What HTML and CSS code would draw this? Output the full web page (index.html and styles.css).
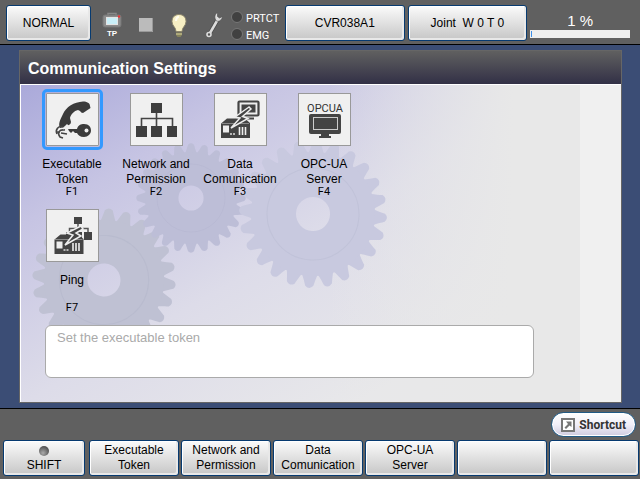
FILE: index.html
```html
<!DOCTYPE html>
<html lang="en">
<head>
<meta charset="utf-8">
<meta name="viewport" content="width=device-width, initial-scale=1">
<title>Communication Settings</title>
<link rel="stylesheet" href="styles.css">
</head>
<body>
<svg class="defs" aria-hidden="true">
  <defs>
    <path id="tooth1" d="M-8 -60C-6 -65 -5 -69 -4 -72Q0 -76 4 -72C5 -69 6 -65 8 -60Z"/>
    <g id="tooth2"><use href="#tooth1"/><use href="#tooth1" transform="rotate(15)"/></g>
    <g id="tooth4"><use href="#tooth2"/><use href="#tooth2" transform="rotate(30)"/></g>
    <g id="tooth8"><use href="#tooth4"/><use href="#tooth4" transform="rotate(60)"/></g>
    <g id="gear">
      <use href="#tooth8"/><use href="#tooth8" transform="rotate(120)"/><use href="#tooth8" transform="rotate(240)"/>
      <circle r="39.500" fill="none" stroke="currentColor" stroke-width="45"/>
      <circle r="46" fill="none" stroke="#8f90b0" stroke-opacity=".12"/>
    </g>
    <g id="controller">
      <path d="M9 31.500 15 26.500H33L38 31V46H9Z" fill="#444"/>
      <path d="M9.500 31.500H37" stroke="#888"/>
      <rect x="11" y="33.500" width="6" height="7" fill="#eee"/>
      <path d="M27.500 35V43M30.500 35V43M33.500 35V43" stroke="#eee" stroke-width="1.600"/>
      <path d="M18 42h2m1 0h2" stroke="#ddd" stroke-width="1.500"/>
    </g>
  </defs>
</svg>

<header class="topbar">
  <button class="key mode" type="button">NORMAL</button>
  <div class="status">
    <div class="tp">
      <svg width="20" height="17" viewBox="0 0 20 17" aria-hidden="true">
        <path d="M6 3V1.500H14V3" fill="none" stroke="#888" stroke-width="1.500"/>
        <rect x="1" y="3" width="18" height="12" rx="2" fill="#8b8b8b" stroke="#777"/>
        <rect x="4.500" y="5.500" width="11" height="7" fill="#c9eff8" stroke="#e4e4e4"/>
        <circle cx="17" cy="4.500" r="1.200" fill="#e33"/>
      </svg>
      <span>TP</span>
    </div>
    <svg width="14" height="14" viewBox="0 0 14 14" aria-hidden="true"><rect width="14" height="14" fill="#bbb"/><path d="M0 13.500H13.500V0" fill="none" stroke="#999"/></svg>
    <svg width="18" height="25" viewBox="0 0 18 25" aria-hidden="true">
      <path d="M9 1.500C4.500 1.500 2 4.500 2 8.500C2 13 6 14 6 18.500H12C12 14 16 13 16 8.500C16 4.500 13.500 1.500 9 1.500Z" fill="#f7efc4" stroke="#8c866c"/>
      <path d="M6 8C6 5.500 7 4 9 3.500" fill="none" stroke="#fffdf0" stroke-width="2"/>
      <path d="M6 19.500H12V22L10.500 24H7.500L6 22Z" fill="#87845c"/><path d="M6 21H12" stroke="#d5cf9b"/>
    </svg>
    <svg width="18" height="28" viewBox="0 0 18 28" aria-hidden="true">
      <path d="M12.500 9 5 22" stroke="#444" stroke-width="4"/>
      <path d="M12.500 9 5 22" stroke="#dcdcdc" stroke-width="2.600"/>
      <path d="M12.500 1.500C9.500 3 9 7.500 11.500 10C14 11 17 9 17.500 5.500L14.500 7 12.500 5.500Z" fill="#dcdcdc" stroke="#4a4a4a" stroke-width=".6"/>
      <circle cx="4" cy="23.500" r="2" fill="#555" stroke="#dcdcdc" stroke-width="1.600"/>
    </svg>
  </div>
  <ul class="lamps">
    <li>PRTCT</li>
    <li>EMG</li>
  </ul>
  <button class="key program" type="button">CVR038A1</button>
  <button class="key program" type="button">Joint&nbsp; W 0 T 0</button>
  <div class="speed">
    <label for="speed">1 %</label>
    <progress id="speed" value="1" max="100">1 %</progress>
  </div>
</header>

<main class="workspace">
  <section class="panel">
    <h1>Communication Settings</h1>
    <div class="content">
      <svg class="gears" width="400" height="318" viewBox="20 85 400 318" aria-hidden="true">
        <use href="#gear" class="gear-left" transform="translate(104 280) rotate(4) scale(.97)"/>
        <use href="#gear" class="gear-middle" transform="translate(191 198) scale(.74)"/>
        <use href="#gear" class="gear-right" transform="translate(313 214) rotate(3)"/>
      </svg>
      <div class="items">
        <button class="item selected" type="button">
          <span class="tile"><svg width="51" height="51" viewBox="0 0 51 51" aria-hidden="true">
            <path d="M13 34C11 30 13 26 16 20C19 13 27 8 36 7.500C40 7.500 43 9 43 12L43.500 14L36 19Q34 19 33 17L31 16C27 17 24 20 23 24L24 28Q24 30 22 31L17 33Z" fill="#3b3b3b"/>
            <path d="M21 35H30C31 31 34 30 37 30C42 30 44 33 44 36.500C44 40 41 43 37 43C33 43 31 41 30 39H28L26 37 24 39 22 37Z" fill="#3b3b3b"/>
            <circle cx="39.500" cy="36.500" r="2" fill="#eee"/>
            <path d="M17 33C11 31 8 36 10 40M18 36C12 35 10 39 13 43L16 44M20 40 14 39M9 38H13" fill="none" stroke="#444" stroke-width="1.600"/>
            <path d="M16 35 20 31 23 34" fill="none" stroke="#eee" stroke-width="1.500"/>
          </svg></span>
          <span class="name">Executable<br>Token</span><span class="fkey">F1</span>
        </button>
        <button class="item" type="button">
          <span class="tile"><svg width="51" height="51" viewBox="0 0 51 51" aria-hidden="true">
            <path d="M25.500 18V33M10.500 33V24.500H41.500V33" fill="none" stroke="#444" stroke-width="1.600"/>
            <path d="M20 9H31V19H20ZM5 32H16V43H5ZM20 32H31V43H20ZM36 32H46V43H36Z" fill="#3e3e3e"/>
          </svg></span>
          <span class="name">Network and<br>Permission</span><span class="fkey">F2</span>
        </button>
        <button class="item" type="button">
          <span class="tile"><svg width="51" height="51" viewBox="0 0 51 51" aria-hidden="true">
            <g transform="translate(-3 -2)"><use href="#controller"/></g>
            <rect x="23.500" y="7.500" width="20" height="14" rx="1" fill="#eee" stroke="#444" stroke-width="2.200"/>
            <path d="M26.500 10.500H40.500V18.500H26.500Z" fill="#444"/><path d="M31 24.500H39" stroke="#444" stroke-width="2"/>
            <path d="M34 13 20 23 25 24 16 34 33 24.500 27.500 22.500 36 15Z" fill="#444" stroke="#eee" stroke-width="1.500"/>
          </svg></span>
          <span class="name">Data<br>Comunication</span><span class="fkey">F3</span>
        </button>
        <button class="item" type="button">
          <span class="tile"><svg width="51" height="51" viewBox="0 0 51 51" aria-hidden="true">
            <text x="26" y="18" text-anchor="middle" class="opc">OPCUA</text>
            <rect x="10" y="20" width="32" height="20" rx="2" fill="#444"/>
            <rect x="14.500" y="23.500" width="24" height="12" fill="#444" stroke="#ccc"/>
            <path d="M22 40H30V42H32V44H20V42H22Z" fill="#444"/>
          </svg></span>
          <span class="name">OPC-UA<br>Server</span><span class="fkey">F4</span>
        </button>
        <button class="item" type="button">
          <span class="tile"><svg width="51" height="51" viewBox="0 0 51 51" aria-hidden="true">
            <path d="M31 14V22M22.500 24V18.500H41V23" fill="none" stroke="#555" stroke-width="1.500"/>
            <path d="M27 7H35V14H27ZM27 22H35V30H27ZM37 22H45V30H37ZM19 22H25V26H19Z" fill="#444"/>
            <g transform="translate(-1.500 -2)"><use href="#controller"/></g>
            <path d="M34 16 20 23 26 25 18 35 34 26 29 23 36 19Z" fill="#444" stroke="#eee" stroke-width="1.500"/>
          </svg></span>
          <span class="name">Ping</span><span class="fkey">F7</span>
        </button>
      </div>
      <p class="hint">Set the executable token</p>
    </div>
  </section>
</main>

<footer class="bottombar">
  <button class="shortcut" type="button">
    <svg width="14" height="14" viewBox="0 0 14 14" aria-hidden="true"><rect x="1" y="1" width="12" height="12" fill="#fff" stroke="#777" stroke-width="2"/><path d="M5 3.500H10.500V9L8.500 7.500 5 11 3.500 9.500 7 6Z" fill="#777"/></svg>
    Shortcut
  </button>
  <nav class="keys" aria-label="Function keys">
    <button class="key" type="button"><span class="led"></span>SHIFT</button>
    <button class="key" type="button">Executable<br>Token</button>
    <button class="key" type="button">Network and<br>Permission</button>
    <button class="key" type="button">Data<br>Comunication</button>
    <button class="key" type="button">OPC-UA<br>Server</button>
    <button class="key" type="button" aria-label="Unassigned"></button>
    <button class="key" type="button" aria-label="Unassigned"></button>
  </nav>
</footer>
</body>
</html>
```
FILE: styles.css
```css
* { box-sizing: border-box; }

body {
  margin: 0;
  min-height: 100vh;
  display: flex;
  flex-direction: column;
  background: #3b4d75;
  color: #000;
  font: 12px/15px "Liberation Sans", Arial, sans-serif;
}

button { font: inherit; color: inherit; cursor: pointer; }

.defs { position: absolute; width: 0; height: 0; }

.key {
  min-width: 0;
  height: 36px;
  padding: 0;
  border: 1px solid #063a70;
  border-radius: 3px;
  background: linear-gradient(#fbfbfb, #c6c6c6);
  box-shadow: inset 1px 1px #fff, inset -2px -2px #e8e8e8;
  text-align: center;
}

.topbar {
  display: flex;
  align-items: center;
  padding: 2px 10px 0 6px;
  height: 45px;
  background: #606060;
  border-bottom: 1px solid #000;
  color: #fff;
}
.topbar .key { color: #000; }
.mode { flex: 84 0 0; }
.program { flex: 119 0 0; margin-right: 3px; }

.status { display: flex; align-items: center; gap: 17px; margin: 0 8px 0 11px; padding-top: 4px; }
.tp { display: flex; flex-direction: column; align-items: center; gap: 1px; font: bold 8px/8px "Liberation Sans", Arial, sans-serif; }

.lamps { flex: none; width: 46px; list-style: none; margin: 0 8px 0 0; padding: 8px 0 0; font: 11px/17px Roboto, sans-serif; }
.lamps li { display: flex; align-items: center; gap: 3px; }
.lamps li::before {
  content: "";
  flex: none;
  width: 10px;
  height: 10px;
  margin-bottom: 4px;
  border: 1px solid #777;
  border-radius: 50%;
  background: #414141;
}

.speed { flex: 101 0 0; display: flex; flex-direction: column; padding-top: 4px; font-size: 15px; line-height: 18px; text-align: center; }
.speed progress { appearance: none; width: 100%; height: 8px; border: 1px solid #eee; background: #eee; }
.speed progress::-webkit-progress-bar { background: #eee; }
.speed progress::-webkit-progress-value { background: #3b8ee8; }

.workspace { flex: 1; display: flex; padding: 5px 18px 5px 19px; }

.panel {
  flex: 1;
  display: flex;
  flex-direction: column;
  border: 1px solid #666;
  background: #f0f0f0;
}
h1 {
  margin: 0;
  padding-left: 8px;
  height: 33px;
  background: linear-gradient(#606060, #323046);
  color: #fff;
  font-size: 16px;
  line-height: 36px;
}
.content {
  flex: 1;
  position: relative;
  margin-right: 41px;
  padding: 6px 46px 0 9px;
  border-left: 1px solid #fff;
  background:
    linear-gradient(90deg, transparent 55%, #e8e8e8 88%),
    linear-gradient(150deg, #aaa9da, #c6c4e3 22%, #dddce9 50%, #e8e8ea 80%);
}
.content::before {
  content: "";
  position: absolute;
  inset: 0 -41px auto -1px;
  border-top: 1px solid #fff;
}
.gears { position: absolute; top: 1px; left: -1px; }
.gears use { fill: currentColor; }
.gear-left { color: #bfc1d3; }
.gear-middle { color: #bdbed7; }
.gear-right { color: #c8c9df; }

.items { position: relative; display: grid; grid-template-columns: repeat(4, 84px); grid-auto-rows: 116px; }
.item {
  display: flex;
  flex-direction: column;
  align-items: center;
  justify-content: flex-start;
  padding: 3px 0 0;
  border: 0;
  background: none;
  white-space: nowrap;
}
.tile { display: flex; width: 53px; height: 53px; border: 1px solid #999; background: #f0f0f0; }
.selected .tile { outline: 3px solid #3399ff; border-radius: 1px; outline-offset: 1px; }
.name { margin-top: 11px; height: 29px; }
.fkey { font: 11px/12px Roboto, sans-serif; }
.opc { font: 11px Roboto, sans-serif; fill: #333; }

.hint {
  position: relative;
  margin: 3px 0 0 15px;
  padding: 4px 11px;
  height: 53px;
  border: 1px solid #aaa;
  border-radius: 6px;
  background: #fff;
  color: #aaa;
  font-size: 13px;
}

.bottombar {
  display: flex;
  flex-direction: column;
  padding: 3px 1px 3px 3px;
  gap: 3px;
  border-top: 1px solid #000;
  background: #606060;
}
.shortcut {
  align-self: flex-end;
  display: flex;
  align-items: center;
  gap: 4px;
  height: 25px;
  margin-right: 3px;
  padding: 0 9px;
  border: 1px solid #205a86;
  border-radius: 13px;
  background: linear-gradient(#fff, #f1eff8 50%, #cfcbe0);
  box-shadow: inset 0 0 0 1px #fff;
  color: #333;
  font: bold 12px Roboto, sans-serif;
}
.keys { display: grid; grid-template-columns: 84fr repeat(6, 90fr); gap: 2px; }
.keys .key:first-child { margin-right: 2px; }
.led {
  display: block;
  width: 10px;
  height: 10px;
  margin: 3px auto 2px;
  border-radius: 50%;
  background: radial-gradient(circle at 40% 70%, #aaa, #555 70%);
}
```
